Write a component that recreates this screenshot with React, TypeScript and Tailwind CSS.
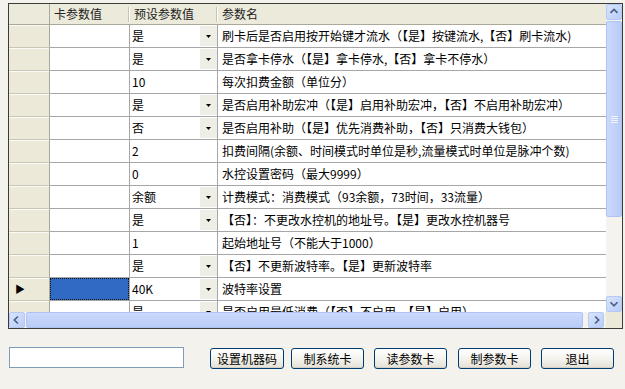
import React from "react";

type Row = { val: string; dd: boolean; name: string };

const rows: Row[] = [
  { val: "是", dd: true, name: "刷卡后是否启用按开始键才流水（【是】按键流水,【否】刷卡流水)" },
  { val: "是", dd: true, name: "是否拿卡停水（【是】拿卡停水,【否】拿卡不停水）" },
  { val: "10", dd: false, name: "每次扣费金额（单位分）" },
  { val: "是", dd: true, name: "是否启用补助宏冲（【是】启用补助宏冲，【否】不启用补助宏冲）" },
  { val: "否", dd: true, name: "是否启用补助（【是】优先消费补助，【否】只消费大钱包）" },
  { val: "2", dd: false, name: "扣费间隔(余额、时间模式时单位是秒,流量模式时单位是脉冲个数)" },
  { val: "0", dd: false, name: "水控设置密码（最大9999）" },
  { val: "余额", dd: true, name: "计费模式：消费模式（93余额，73时间，33流量）" },
  { val: "是", dd: true, name: "【否】：不更改水控机的地址号。【是】更改水控机器号" },
  { val: "1", dd: false, name: "起始地址号（不能大于1000）" },
  { val: "是", dd: true, name: "【否】不更新波特率。【是】更新波特率" },
  { val: "40K", dd: true, name: "波特率设置" },
  { val: "是", dd: true, name: "是否启用最低消费（【否】不启用，【是】启用）" },
];

const Arrow = ({ dir }: { dir: "up" | "down" | "left" | "right" }) => {
  const d = {
    up: "M4 9 L8 5 L12 9",
    down: "M4 6 L8 10 L12 6",
    left: "M9 4 L5 8 L9 12",
    right: "M7 4 L11 8 L7 12",
  }[dir];
  return (
    <svg width="16" height="16" viewBox="0 0 16 16">
      <path d={d} fill="none" stroke="#4d6185" strokeWidth="2" />
    </svg>
  );
};

const ScrollBtn = ({ dir }: { dir: "up" | "down" | "left" | "right" }) => (
  <div className="w-[16px] h-[16px] shrink-0 rounded-[2px] border border-[#b5c9f5] bg-gradient-to-br from-[#d9e4fd] to-[#b9cdf8] flex items-center justify-center">
    <Arrow dir={dir} />
  </div>
);

const Cell = ({ row, selected }: { row: Row; selected: boolean }) => (
  <div className="flex h-[23px] shrink-0">
    <div className="w-[41px] shrink-0 bg-[#ece9d8] border-r border-r-[#aca899] border-b border-b-[#c9c6b6] shadow-[inset_0_1px_0_#fbfaf6] flex items-center pl-[6px]">
      {selected && <span className="text-[10px] leading-none text-black">▶</span>}
    </div>
    <div className="w-[80px] shrink-0 border-r border-b border-[#a7a7a7] bg-white">
      {selected && (
        <div className="w-full h-full bg-[#316ac5] border border-dotted border-[#111]" />
      )}
    </div>
    <div className="w-[88px] shrink-0 border-r border-b border-[#a7a7a7] bg-white flex items-center">
      <span className="flex-1 pl-[2px] text-[12px]">{row.val}</span>
      {row.dd && (
        <div className="w-[17px] h-[20px] bg-[#eeede6] flex items-center justify-center">
          <svg width="5" height="3" viewBox="0 0 5 3">
            <path d="M0 0 H5 L2.5 3 Z" fill="#000" />
          </svg>
        </div>
      )}
    </div>
    <div className="flex-1 border-b border-[#a7a7a7] bg-white flex items-center pl-[4px] text-[12px] whitespace-nowrap overflow-hidden">
      {row.name}
    </div>
  </div>
);

const Button = ({ label, w }: { label: string; w: string }) => (
  <button
    className={`${w} h-[21px] rounded-[3px] border border-[#003c74] bg-gradient-to-b from-white via-[#f4f3ee] to-[#e3e1d6] text-[12px] text-black flex items-center justify-center shadow-[inset_0_-1px_0_#d6d0c5]`}
  >
    {label}
  </button>
);

export default function App() {
  return (
    <div
      className="w-[625px] h-[389px] bg-[#f3f2ec] relative overflow-hidden text-black"
      style={{ fontFamily: '"Noto Sans CJK SC", "Liberation Sans", sans-serif' }}
    >
      <div className="pt-[3px] pl-[8px]">
        <div className="w-[615px] h-[326px] border border-[#3b3b3b] grid grid-cols-[597px_16px] grid-rows-[308px_16px]">
          <div className="overflow-hidden flex flex-col bg-white">
            <div className="flex h-[21px] shrink-0 bg-[#ebeadb] border-b border-[#aca899] text-[12px] text-[#222]">
              <div className="w-[41px] shrink-0 border-r border-[#aca899]" />
              <div className="w-[80px] shrink-0 flex items-center pl-[4px] relative">
                卡参数值
                <div className="absolute right-0 top-[3px] h-[15px] w-[2px] border-l border-[#c7c5b2] border-r border-r-white" />
              </div>
              <div className="w-[88px] shrink-0 flex items-center pl-[4px] relative">
                预设参数值
                <div className="absolute right-0 top-[3px] h-[15px] w-[2px] border-l border-[#c7c5b2] border-r border-r-white" />
              </div>
              <div className="flex-1 flex items-center pl-[4px]">参数名</div>
            </div>
            {rows.map((r, i) => (
              <Cell key={i} row={r} selected={i === 11} />
            ))}
          </div>

          <div className="flex flex-col bg-[#f4f3ee]">
            <ScrollBtn dir="up" />
            <div className="mt-[1px] h-[196px] rounded-[2px] border border-[#aec3f4] bg-gradient-to-r from-[#cbd9fd] to-[#b9cbf6] flex flex-col items-center justify-center gap-[1px]">
              <div className="w-[7px] h-[1px] bg-[#eef3fe]" />
              <div className="w-[7px] h-[1px] bg-[#eef3fe]" />
              <div className="w-[7px] h-[1px] bg-[#eef3fe]" />
              <div className="w-[7px] h-[1px] bg-[#eef3fe]" />
            </div>
            <div className="flex-1" />
            <ScrollBtn dir="down" />
          </div>

          <div className="flex bg-[#f4f3ee]">
            <ScrollBtn dir="left" />
            <div className="ml-[1px] w-[557px] rounded-[2px] border border-[#aec3f4] bg-gradient-to-b from-[#cbd9fd] to-[#b9cbf6]" />
            <div className="flex-1" />
            <ScrollBtn dir="right" />
            <div className="w-[2px]" />
          </div>
          <div className="bg-[#ece9d8]" />
        </div>
      </div>

      <div className="flex items-start pl-[9px] mt-[18px]">
        <div className="w-[175px] h-[21px] border border-[#7f9db9] bg-white" />
        <div className="ml-[26px] mt-[1px]">
          <Button label="设置机器码" w="w-[74px]" />
        </div>
        <div className="ml-[7px] mt-[1px]">
          <Button label="制系统卡" w="w-[73px]" />
        </div>
        <div className="ml-[10px] mt-[1px]">
          <Button label="读参数卡" w="w-[73px]" />
        </div>
        <div className="ml-[11px] mt-[1px]">
          <Button label="制参数卡" w="w-[73px]" />
        </div>
        <div className="ml-[10px] mt-[1px]">
          <Button label="退出" w="w-[73px]" />
        </div>
      </div>
    </div>
  );
}
